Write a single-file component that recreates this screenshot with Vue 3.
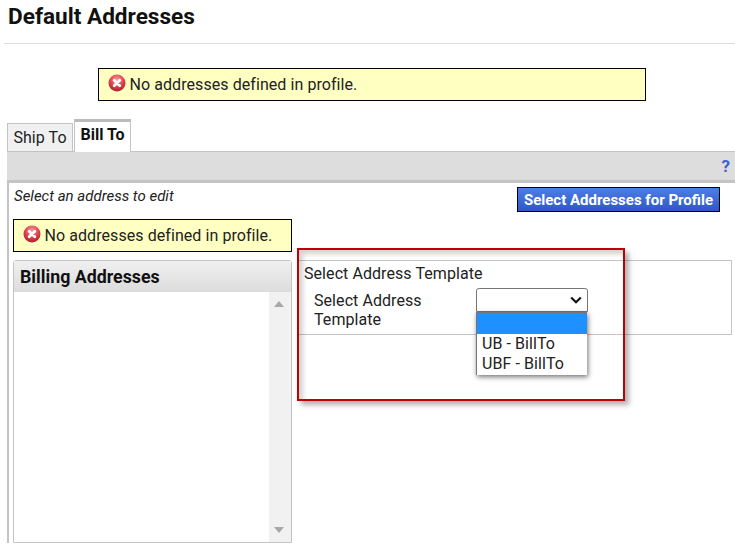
<script setup>
const templates = ['', 'UB - BillTo', 'UBF - BillTo']
const noAddresses = 'No addresses defined in profile.'
</script>

<template>
  <div class="page">
    <h1 class="title">Default Addresses</h1>

    <div class="alert alert-top">
      <svg class="alert-icon" viewBox="0 0 18 18">
        <defs>
          <radialGradient id="errGrad" cx="50%" cy="30%" r="70%">
            <stop offset="0" stop-color="#f79a9a" />
            <stop offset="0.55" stop-color="#e04550" />
            <stop offset="1" stop-color="#b01c28" />
          </radialGradient>
        </defs>
        <circle cx="9" cy="9" r="8.5" fill="url(#errGrad)" />
        <path d="M6.2 6.2l5.6 5.6M11.8 6.2l-5.6 5.6" stroke="#fff" stroke-width="2.8" stroke-linecap="round" />
      </svg>
      <span>{{ noAddresses }}</span>
    </div>

    <div class="tabs">
      <div class="tab">Ship To</div>
      <div class="tab active">Bill To</div>
    </div>

    <section class="panel">
      <div class="toolbar"><span class="help">?</span></div>

      <div class="panel-top">
        <em class="hint">Select an address to edit</em>
        <button class="profile-btn" type="button">Select Addresses for Profile</button>
      </div>

      <div class="columns">
        <div class="left-col">
          <div class="alert alert-side">
            <svg class="alert-icon" viewBox="0 0 18 18">
              <circle cx="9" cy="9" r="8.5" fill="url(#errGrad)" />
              <path d="M6.2 6.2l5.6 5.6M11.8 6.2l-5.6 5.6" stroke="#fff" stroke-width="2.8" stroke-linecap="round" />
            </svg>
            <span>{{ noAddresses }}</span>
          </div>

          <div class="billing">
            <div class="billing-head">Billing Addresses</div>
            <div class="billing-body">
              <div class="scrollbar">
                <i class="arrow up"></i>
                <i class="arrow down"></i>
              </div>
            </div>
          </div>
        </div>

        <div class="right-col">
          <div class="template-box">
            <div class="template-title">Select Address Template</div>
            <div class="template-row">
              <label class="template-label">Select Address Template</label>
              <div class="select-wrap">
                <div class="select">
                  <svg class="chevron" viewBox="0 0 12 8">
                    <path d="M1.2 1.5L6 6.2l4.8-4.7" fill="none" stroke="#111" stroke-width="2.1" />
                  </svg>
                </div>
                <ul class="options">
                  <li v-for="(t, i) in templates" :key="i" :class="{ selected: i === 0 }">{{ t }}</li>
                </ul>
              </div>
            </div>
          </div>
          <div class="highlight"></div>
        </div>
      </div>
    </section>
  </div>
</template>

<style>
html,
body {
  margin: 0;
  overflow: hidden;
  background: #fff;
}
</style>

<style scoped>
.page {
  width: 735px;
  height: 544px;
  overflow: hidden;
  font-family: Roboto, Arial, sans-serif;
  font-size: 16px;
  letter-spacing: 0.07px;
  color: #222;
  box-sizing: border-box;
}

.title {
  margin: 0 0 0 4px;
  padding: 4px 0 0 4px;
  height: 39px;
  box-sizing: content-box;
  font-size: 22.6px;
  line-height: 25px;
  font-weight: 700;
  letter-spacing: 0;
  color: #111;
  border-bottom: 1px solid #ddd;
}

.alert {
  display: flex;
  align-items: center;
  gap: 4px;
  box-sizing: border-box;
  height: 33px;
  border: 1.5px solid #000;
  background: #ffffc2;
  padding: 0 0 0 8.5px;
}

.alert-top {
  width: 548px;
  margin: 24px 0 0 98px;
}

.alert-side {
  width: 279px;
}

.alert-icon {
  width: 18px;
  height: 18px;
  margin-top: -3px;
  flex: none;
}

.tabs {
  display: flex;
  align-items: flex-end;
  gap: 1px;
  margin: 18px 0 0 7px;
  height: 32px;
}

.tab {
  box-sizing: border-box;
  height: 28px;
  width: 66px;
  border: 1px solid #c4c4c4;
  border-bottom: none;
  background: #f0f0f0;
  text-align: center;
  line-height: 28px;
}

.tab.active {
  position: relative;
  z-index: 1;
  height: 33px;
  width: 57px;
  border-top: 3px solid #bbb;
  background: #fff;
  font-weight: 700;
  line-height: 26px;
  letter-spacing: 0;
  color: #111;
  margin-bottom: -1px;
}

.panel {
  margin-left: 7px;
  border-left: 2px solid #c4c4c4;
}

.toolbar {
  box-sizing: border-box;
  height: 32px;
  background: #ddd;
  border-top: 1px solid #c4c4c4;
  border-bottom: 3px solid #c4c4c4;
  margin-left: -2px;
  display: flex;
  justify-content: flex-end;
  align-items: center;
  padding-right: 5px;
}

.help {
  color: #3f5fd0;
  font-weight: 700;
  font-size: 17px;
}

.panel-top {
  display: flex;
  justify-content: space-between;
  height: 36px;
  padding: 4px 15px 0 5px;
  box-sizing: border-box;
}

.hint {
  font-size: 15px;
  line-height: 18px;
  letter-spacing: 0;
}

.profile-btn {
  box-sizing: border-box;
  width: 203px;
  height: 25px;
  padding: 0;
  border: 1px solid #000;
  background: linear-gradient(#4d7ee8, #2f57c4);
  color: #fff;
  font-family: inherit;
  font-size: 15px;
  font-weight: 700;
  letter-spacing: 0;
}

.columns {
  display: flex;
  gap: 6px;
  padding-left: 4px;
}

.left-col {
  width: 279px;
  flex: none;
}

.billing {
  box-sizing: border-box;
  margin-top: 8px;
  height: 283px;
  border: 1px solid #c4c4c4;
  border-radius: 3px 3px 0 0;
  display: flex;
  flex-direction: column;
}

.billing-head {
  height: 31px;
  flex: none;
  box-sizing: border-box;
  padding: 5px 0 0 6px;
  background: linear-gradient(#f0f0f0, #dcdcdc);
  font-size: 17.8px;
  line-height: 22px;
  font-weight: 700;
  letter-spacing: 0;
  color: #111;
}

.billing-body {
  flex: 1;
  display: flex;
  justify-content: flex-end;
}

.scrollbar {
  width: 22px;
  background: #f1f1f1;
  position: relative;
}

.arrow {
  position: absolute;
  left: 5px;
  width: 0;
  height: 0;
  border-left: 5px solid transparent;
  border-right: 5px solid transparent;
}

.arrow.up {
  top: 9px;
  border-bottom: 6px solid #a8a8a8;
}

.arrow.down {
  bottom: 9px;
  border-top: 6px solid #a8a8a8;
}

.right-col {
  flex: 1;
  position: relative;
  padding-right: 3px;
}

.template-box {
  box-sizing: border-box;
  height: 75px;
  margin-top: 41px;
  border: 1px solid #c4c4c4;
  padding: 3px 0 0 5px;
}

.template-title {
  line-height: 19px;
  font-size: 16px;
}

.template-row {
  display: flex;
  margin-top: 8px;
  padding-left: 10px;
}

.template-label {
  width: 162px;
  line-height: 19px;
}

.select-wrap {
  position: relative;
  margin-top: -3px;
}

.select {
  box-sizing: border-box;
  width: 112px;
  height: 24px;
  border: 1px solid #767676;
  border-radius: 3px 3px 0 0;
  background: #fff;
  position: relative;
}

.chevron {
  position: absolute;
  right: 5px;
  top: 7px;
  width: 12px;
  height: 8px;
}

.options {
  position: absolute;
  left: 0;
  top: 24px;
  z-index: 2;
  box-sizing: border-box;
  width: 111px;
  height: 63px;
  margin: 0;
  padding: 0;
  list-style: none;
  background: #fff;
  border-left: 1px solid #767676;
  border-top: 1px solid #767676;
  box-shadow: 1px 2px 5px rgba(0, 0, 0, 0.55);
}

.options li {
  height: 20.5px;
  line-height: 20.5px;
  padding-left: 5px;
  box-sizing: border-box;
}

.options li.selected {
  background: #1e90ff;
}

.highlight {
  position: absolute;
  left: -1px;
  top: 29px;
  width: 328px;
  height: 153px;
  box-sizing: border-box;
  border: 2px solid #c00000;
  box-shadow: 4px 4px 5px rgba(0, 0, 0, 0.3), inset 4px 4px 5px rgba(0, 0, 0, 0.18);
  pointer-events: none;
}
</style>
